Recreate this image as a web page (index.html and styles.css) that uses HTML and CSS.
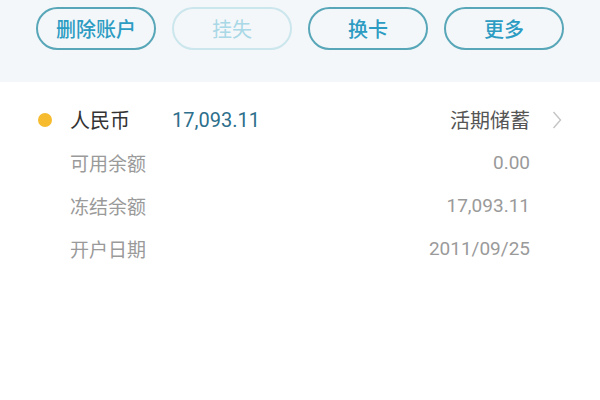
FILE: index.html
```html
<!DOCTYPE html>
<html lang="zh-CN">
<head>
<meta charset="utf-8">
<link rel="stylesheet" href="styles.css">
</head>
<body>
<div class="page">
  <div class="toolbar">
    <div class="btn">删除账户</div>
    <div class="btn btn-disabled">挂失</div>
    <div class="btn">换卡</div>
    <div class="btn">更多</div>
  </div>
  <div class="account">
    <div class="row row-main">
      <span class="dot"></span>
      <span class="currency">人民币</span>
      <span class="amount">17,093.11</span>
      <span class="type">活期储蓄</span>
      <svg class="chevron" width="10" height="20" viewBox="0 0 10 20"><path d="M1.5 2 L8.5 10 L1.5 18" fill="none" stroke="#c4c4c4" stroke-width="1.4"/></svg>
    </div>
    <div class="row row-detail">
      <span class="label">可用余额</span>
      <span class="value">0.00</span>
    </div>
    <div class="row row-detail">
      <span class="label">冻结余额</span>
      <span class="value">17,093.11</span>
    </div>
    <div class="row row-detail">
      <span class="label">开户日期</span>
      <span class="value">2011/09/25</span>
    </div>
  </div>
</div>
</body>
</html>
```

FILE: styles.css
```css
* { box-sizing: border-box; }
html, body { margin: 0; padding: 0; background: #ffffff; }
body {
  font-family: Roboto, "Noto Sans CJK SC", "Noto Sans", sans-serif;
  width: 600px;
  height: 400px;
  overflow: hidden;
}
.toolbar {
  height: 82px;
  background: #f4f7fa;
  display: flex;
  gap: 16px;
  padding: 7px 36px 0 36px;
}
.btn {
  width: 120px;
  height: 43px;
  border: 2px solid #58a7b8;
  border-radius: 22px;
  display: flex;
  align-items: center;
  justify-content: center;
  color: #2c9cc2;
  font-size: 20px;
  font-weight: 500;
  background: transparent;
}
.btn-disabled {
  border-color: #cbe6ec;
  color: #a9d8e6;
  font-weight: 400;
}
.account {
  padding-top: 16px;
}
.row {
  height: 43px;
  display: flex;
  align-items: center;
}
.row-main {
  padding: 0 38px 0 38px;
}
.dot {
  width: 14px;
  height: 14px;
  border-radius: 50%;
  background: #f6bb2e;
  margin-right: 18px;
  flex: none;
}
.currency {
  width: 102px;
  font-size: 20px;
  color: #333333;
}
.amount {
  font-size: 20px;
  color: #2d6f8c;
}
.type {
  margin-left: auto;
  font-size: 20px;
  color: #555555;
}
.chevron {
  margin-left: 22px;
  flex: none;
}
.row-detail {
  padding: 0 70px 0 70px;
}
.label {
  font-size: 19px;
  color: #9a9a9a;
}
.value {
  margin-left: auto;
  font-size: 19px;
  color: #9a9a9a;
}
```
